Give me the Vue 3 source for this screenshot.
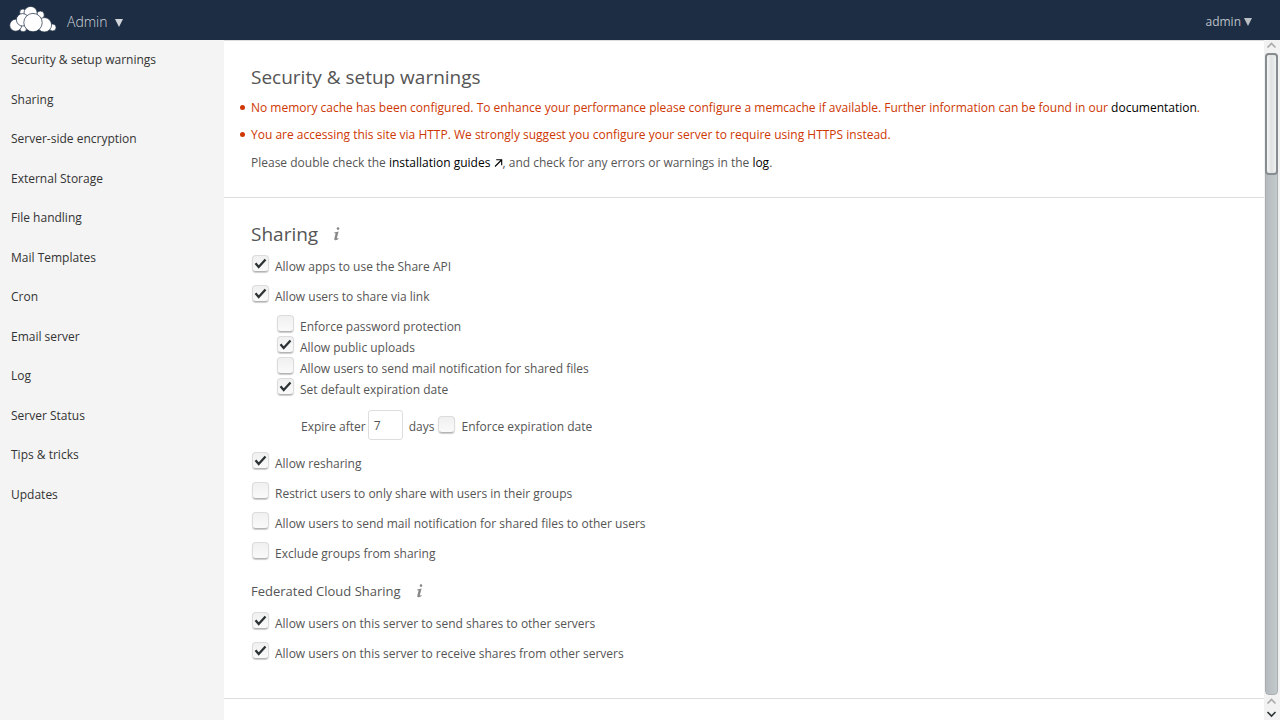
<script setup>
import { ref } from 'vue'

const sections = [
  'Security & setup warnings', 'Sharing', 'Server-side encryption', 'External Storage',
  'File handling', 'Mail Templates', 'Cron', 'Email server', 'Log', 'Server Status',
  'Tips & tricks', 'Updates'
]
const apiOptions = ref([
  { id: 'share-api', label: 'Allow apps to use the Share API', on: true },
  { id: 'share-link', label: 'Allow users to share via link', on: true }
])
const linkOptions = ref([
  { id: 'enforce-password', label: 'Enforce password protection', on: false },
  { id: 'public-uploads', label: 'Allow public uploads', on: true },
  { id: 'mail-shared', label: 'Allow users to send mail notification for shared files', on: false },
  { id: 'default-expiration', label: 'Set default expiration date', on: true }
])
const groupOptions = ref([
  { id: 'resharing', label: 'Allow resharing', on: true },
  { id: 'restrict-groups', label: 'Restrict users to only share with users in their groups', on: false },
  { id: 'mail-others', label: 'Allow users to send mail notification for shared files to other users', on: false },
  { id: 'exclude-groups', label: 'Exclude groups from sharing', on: false }
])
const federatedOptions = ref([
  { id: 'send-shares', label: 'Allow users on this server to send shares to other servers', on: true },
  { id: 'receive-shares', label: 'Allow users on this server to receive shares from other servers', on: true }
])
const days = ref('7')
const enforceExpiration = ref(false)
</script>

<template>
  <div class="page">
    <header class="header">
      <a href="#" class="logo" aria-label="Home">
        <svg width="48" height="28" viewBox="9 5 48 28" fill="#fff" stroke="#1d2d44" stroke-width="0.7">
          <circle cx="23" cy="12.3" r="3.3" />
          <circle cx="40.3" cy="15" r="4" />
          <circle cx="23.2" cy="28.3" r="3.5" />
          <circle cx="52.6" cy="27.5" r="3.5" />
          <circle cx="15.7" cy="25.2" r="6" />
          <circle cx="30.6" cy="13" r="6.6" />
          <circle cx="22.6" cy="19.8" r="6.2" />
          <circle cx="44.4" cy="24.8" r="7.2" />
          <circle cx="33" cy="22.6" r="9.2" />
        </svg>
      </a>
      <button class="app-menu" type="button">
        Admin
        <svg width="8" height="8" viewBox="0 0 8 8"><path d="M0 0h8L4 8z" fill="currentColor" /></svg>
      </button>
      <button class="user-menu" type="button">
        admin
        <svg width="8" height="8" viewBox="0 0 8 8"><path d="M0 0h8L4 8z" fill="currentColor" /></svg>
      </button>
    </header>

    <div class="body">
      <nav class="sidebar">
        <a v-for="s in sections" :key="s" href="#">{{ s }}</a>
      </nav>

      <main class="content">
        <section class="panel warnings">
          <h2>Security &amp; setup warnings</h2>
          <ul>
            <li>No memory cache has been configured. To enhance your performance please configure a memcache if available. Further information can be found in our <a href="#">documentation</a>.</li>
            <li>You are accessing this site via HTTP. We strongly suggest you configure your server to require using HTTPS instead.</li>
          </ul>
          <p>Please double check the <a href="#">installation guides <svg width="9" height="8" viewBox="0 0 9 8"><path d="M1 7.5L7.5 1M2.2 .8h5.5v5.4" fill="none" stroke="#000" stroke-width="1.1" /></svg></a>, and check for any errors or warnings in the <a href="#">log</a>.</p>
        </section>

        <section class="panel sharing">
          <div class="title">
            <h2>Sharing</h2>
            <a href="#" class="info" aria-label="Sharing documentation">
              <svg width="8" height="14" viewBox="0 0 8 14" fill="#888"><circle cx="5" cy="1.6" r="1.3" /><path d="M1.2 5.5L5.6 4.4L3.8 11.2Q3.7 12 5.6 11.1L5.4 11.9Q3.6 13.3 2.2 13.2Q.9 13 1.4 11.2L2.6 6.5Q2.7 6 1.2 6.2z" /></svg>
            </a>
          </div>
          <div class="group">
            <div v-for="o in apiOptions" :key="o.id" class="row">
              <input :id="o.id" v-model="o.on" type="checkbox"><label :for="o.id">{{ o.label }}</label>
            </div>
          </div>
          <div class="nested">
            <div v-for="o in linkOptions" :key="o.id" class="row tight">
              <input :id="o.id" v-model="o.on" type="checkbox"><label :for="o.id">{{ o.label }}</label>
            </div>
          </div>
          <div class="expire">
            <label for="expire-days">Expire after</label>
            <input id="expire-days" v-model="days" type="text">
            <span>days</span>
            <input id="enforce-expiration" v-model="enforceExpiration" type="checkbox"><label for="enforce-expiration">Enforce expiration date</label>
          </div>
          <div class="group">
            <div v-for="o in groupOptions" :key="o.id" class="row">
              <input :id="o.id" v-model="o.on" type="checkbox"><label :for="o.id">{{ o.label }}</label>
            </div>
          </div>
          <div class="title subtitle">
            <h3>Federated Cloud Sharing</h3>
            <a href="#" class="info" aria-label="Federated sharing documentation">
              <svg width="8" height="14" viewBox="0 0 8 14" fill="#888"><circle cx="5" cy="1.6" r="1.3" /><path d="M1.2 5.5L5.6 4.4L3.8 11.2Q3.7 12 5.6 11.1L5.4 11.9Q3.6 13.3 2.2 13.2Q.9 13 1.4 11.2L2.6 6.5Q2.7 6 1.2 6.2z" /></svg>
            </a>
          </div>
          <div class="group">
            <div v-for="o in federatedOptions" :key="o.id" class="row">
              <input :id="o.id" v-model="o.on" type="checkbox"><label :for="o.id">{{ o.label }}</label>
            </div>
          </div>
        </section>
      </main>

      <div class="scrollbar" aria-hidden="true">
        <svg width="16" height="12" viewBox="0 0 16 12"><path d="M3.5 6.5L7.5 2.5L11.5 6.5" /></svg>
        <div class="track"><div class="thumb"></div></div>
        <svg width="16" height="12" viewBox="0 0 16 12"><path d="M3.5 8.5L7.5 4.5L11.5 8.5" /></svg>
        <svg class="down" width="16" height="13" viewBox="0 0 16 13"><path d="M3.5 5L7.5 9L11.5 5" /></svg>
      </div>
    </div>
  </div>
</template>

<style>
body { margin: 0; }
</style>

<style scoped>
* { box-sizing: border-box; }
.page {
  height: 100vh;
  display: flex;
  flex-direction: column;
  overflow: hidden;
  font-family: "Open Sans", "Noto Sans", sans-serif;
  font-size: 12px;
  color: #555;
  background: #fff;
}
a { color: #000; text-decoration: none; }
button { border: 0; padding: 0; background: none; font-family: inherit; cursor: pointer; }
h2, h3, p, ul { margin: 0; font-weight: 400; }
.header {
  flex: none;
  height: 40px;
  display: flex;
  align-items: center;
  background: #1d2d44;
  padding: 0 28px 0 9px;
}
.logo { display: flex; padding-bottom: 2px; }
.app-menu, .user-menu { display: flex; align-items: center; }
.app-menu svg, .user-menu svg { margin-top: 2px; }
.app-menu { gap: 7px; margin-left: 10px; padding-top: 3px; font-size: 14px; font-weight: 300; color: #d2d5da; }
.user-menu { gap: 3px; margin-left: auto; padding-top: 2px; font-size: 12px; color: #bbc0c7; }
.body { flex: 1; min-height: 0; display: flex; }
.sidebar {
  flex: none;
  width: 224px;
  background: #f4f4f4;
  display: grid;
  grid-auto-rows: 1fr;
  align-self: stretch;
  align-content: start;
  padding-bottom: 206px;
}
.sidebar a { display: flex; align-items: center; padding-left: 11px; color: #333; }
.content { flex: 1; min-width: 0; overflow: hidden; border-top: 1px solid #ddd; }
.panel { padding: 23px 27px; border-bottom: 1px solid #ddd; }
h2 { font-size: 19px; line-height: 26px; color: #555; }
.warnings ul { list-style: none; padding: 4px 0 0; color: #ce3702; }
.warnings li { position: relative; line-height: 27px; }
.warnings li::before {
  content: "";
  position: absolute;
  left: -11px;
  top: 11px;
  width: 5px;
  height: 5px;
  border-radius: 50%;
  background: #ce3702;
}
.warnings p { margin-top: 1px; line-height: 28px; }
.warnings { padding-bottom: 20px; }
.title { display: flex; align-items: center; gap: 15px; margin-bottom: 5px; }
.info { display: flex; }
.group { display: flex; flex-direction: column; }
.row { display: flex; align-items: center; height: 30px; }
.row.tight { height: 21px; }
.nested { padding: 4px 0 0 25px; }
label, .expire span { line-height: 20px; }
input[type="checkbox"] {
  appearance: none;
  flex: none;
  width: 17px;
  height: 17px;
  margin: 0 6px 7px 1px;
  border: 1px solid #dcdcdc;
  border-bottom-color: #b4b4b4;
  border-radius: 4px;
  background: linear-gradient(#f0f0f0, #fafafa);
  box-shadow: 0 1px 1px #ccc;
}
input[type="checkbox"]:checked {
  background: url("data:image/svg+xml,%3Csvg xmlns='http://www.w3.org/2000/svg' viewBox='0 0 15 15'%3E%3Cpath d='M2.5 7.3L5.7 11L12.5 3.5' fill='none' stroke='%232e3436' stroke-width='2.3'/%3E%3C/svg%3E") center / 15px 15px no-repeat, linear-gradient(#f0f0f0, #fafafa);
}
.expire { display: flex; align-items: center; height: 49px; padding-left: 50px; }
.expire label, .expire span { padding-top: 5px; }
.expire input[type="text"] {
  width: 35px;
  height: 30px;
  margin: 0 6px 0 2px;
  padding: 5px 5px 3px;
  border: 1px solid #ddd;
  border-radius: 3px;
  color: #555;
  font: 12px "Open Sans", sans-serif;
}
.expire input[type="checkbox"] { margin-left: 4px; margin-bottom: 1px; }
.subtitle { height: 40px; margin-bottom: 0; padding-top: 3px; }
h3 { font-size: 13px; line-height: 20px; }
.sharing { padding-bottom: 29px; }
.scrollbar { flex: none; width: 16px; display: flex; flex-direction: column; background: #f2f2f3; padding-top: 1px; }
.scrollbar svg { flex: none; fill: none; stroke: #aaa; stroke-width: 1.6; }
.scrollbar .down { stroke: #2e3436; }
.track {
  flex: 1;
  width: 13px;
  margin-left: 1px;
  border: 1px solid #a8adb0;
  border-radius: 4px;
  background: linear-gradient(90deg, #b4babd, #c4c9cc);
}
.thumb {
  height: 19%;
  margin: -1px;
  border: 2px solid #868c90;
  border-radius: 4px;
  background: linear-gradient(90deg, #f4f5f5, #dfe1e2, #f0f1f1);
}
</style>
